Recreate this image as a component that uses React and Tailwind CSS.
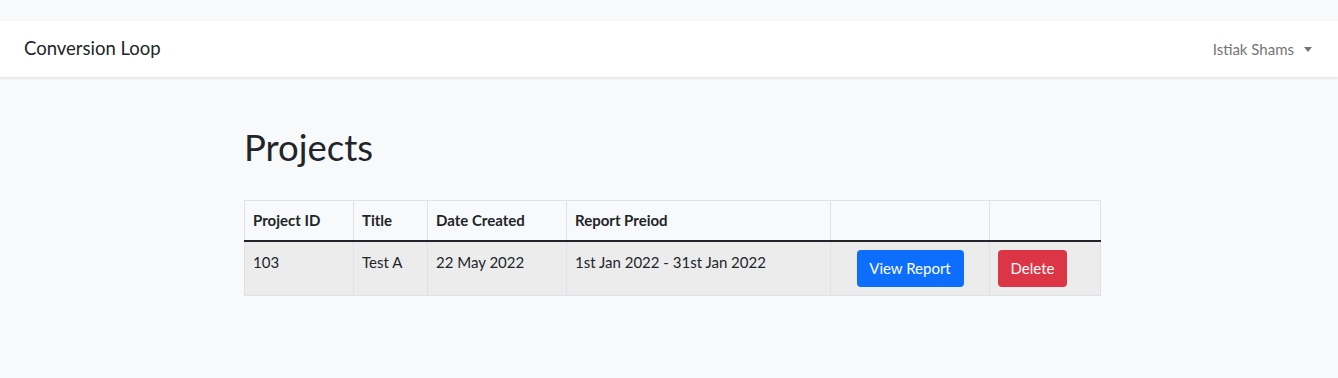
import React from 'react';

const rows = [
  { id: '103', title: 'Test A', created: '22 May 2022', period: '1st Jan 2022 - 31st Jan 2022' },
];

export default function App() {
  return (
    <div
      className="min-h-[378px] bg-[#f8f9fa] pt-[21px] text-[#212529]"
      style={{ fontFamily: 'Lato, "Noto Sans", sans-serif' }}
    >
      {/* Navbar */}
      <nav className="h-[56px] bg-white flex items-center justify-between pl-[24px] pr-[26px] shadow-[0_1px_3px_rgba(0,0,0,0.12)]">
        <span className="text-[18.5px] text-[#212529]">Conversion Loop</span>
        <button className="flex items-center text-[15px] text-[#747577]">
          Istiak Shams
          <span className="ml-[10px] w-0 h-0 border-l-[4px] border-r-[4px] border-t-[5px] border-l-transparent border-r-transparent border-t-[#747577]" />
        </button>
      </nav>

      {/* Content */}
      <main className="w-[856px] ml-[244px] pt-[46px]">
        <h1 className="text-[36.5px] leading-[48px] font-normal">Projects</h1>

        <table className="mt-[29px] w-[856px] border-collapse text-[15px] table-fixed">
          <colgroup>
            <col className="w-[109px]" />
            <col className="w-[74px]" />
            <col className="w-[139px]" />
            <col className="w-[264px]" />
            <col className="w-[159px]" />
            <col className="w-[111px]" />
          </colgroup>
          <thead>
            <tr className="h-[40px]">
              {['Project ID', 'Title', 'Date Created', 'Report Preiod', '', ''].map((h, i) => (
                <th key={i} className="border border-[#dee2e6] border-b-[#212529] border-b-2 px-[8px] text-left font-bold align-middle">
                  {h}
                </th>
              ))}
            </tr>
          </thead>
          <tbody>
            {rows.map(r => (
              <tr key={r.id} className="bg-[#ececed]">
                <td className="border border-[#dee2e6] px-[8px] py-[8px] align-top leading-[24px]">{r.id}</td>
                <td className="border border-[#dee2e6] px-[8px] py-[8px] align-top leading-[24px]">{r.title}</td>
                <td className="border border-[#dee2e6] px-[8px] py-[8px] align-top leading-[24px]">{r.created}</td>
                <td className="border border-[#dee2e6] px-[8px] py-[8px] align-top leading-[24px]">{r.period}</td>
                <td className="border border-[#dee2e6] px-[8px] py-[8px] text-center">
                  <button className="h-[37px] w-[107px] rounded-[4px] bg-[#0d6efd] text-white text-[15px]">View Report</button>
                </td>
                <td className="border border-[#dee2e6] px-[8px] py-[8px]">
                  <button className="h-[37px] w-[69px] rounded-[4px] bg-[#dc3545] text-white text-[15px]">Delete</button>
                </td>
              </tr>
            ))}
          </tbody>
        </table>
      </main>
    </div>
  );
}
